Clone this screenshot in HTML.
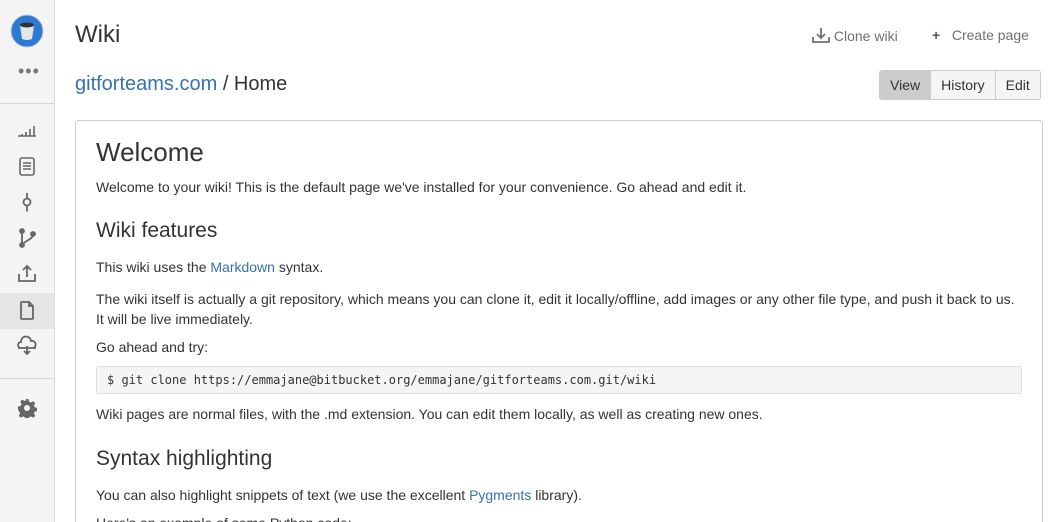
<!DOCTYPE html>
<html style="width:1063px;height:522px;overflow:hidden"><head><meta charset="utf-8"><style>
*{box-sizing:border-box;margin:0;padding:0}
body{width:1063px;height:522px;overflow:hidden;background:#fff;font-family:"Liberation Sans",Arial,sans-serif;color:#333;position:relative}
.side{position:absolute;left:0;top:0;width:55px;height:522px;background:#f4f4f4;border-right:1px solid #ddd}
.sep{position:absolute;left:0;width:54px;height:1px;background:#d6d6d6}
.ic{position:absolute;left:17px;width:20px;height:20px}
.active{position:absolute;left:0;top:293px;width:54px;height:36px;background:#e5e5e5}
h1{position:absolute;left:75px;top:21px;font-size:24px;font-weight:normal;color:#333}
.bc{position:absolute;left:75px;top:73px;font-size:20px;color:#333}
.bc a{color:#3572b0;text-decoration:none}
.tl{position:absolute;top:27px;font-size:14px;color:#707070}
.btns{position:absolute;left:879px;top:70px;height:30px;display:flex;border:1px solid #ccc;border-radius:3px;overflow:hidden;font-size:14px}
.btns div{padding:0 10px;line-height:28px;background:#f5f5f5;border-left:1px solid #ccc;color:#333}
.btns div:first-child{border-left:none;background:#ccc}
.card{position:absolute;left:75px;top:120px;width:968px;height:440px;border:1px solid #ccc;border-radius:4px}
.c{position:absolute;left:96px;font-size:14px;color:#333}
.c a{color:#3572b0;text-decoration:none}
h2{position:absolute;left:96px;font-weight:normal;color:#333}
pre{position:absolute;left:96px;top:366px;width:926px;height:28px;background:#f5f5f5;border:1px solid #ddd;border-radius:3px;font-family:"DejaVu Sans Mono","Liberation Mono",monospace;font-size:12px;line-height:26px;padding-left:10px;color:#333}
</style></head><body>
<div class="side">
<svg style="position:absolute;left:10px;top:14px" width="34" height="34"><circle cx="17" cy="17" r="16" fill="#2d7ad2" stroke="#bcd" stroke-width="1"/><path d="M10 11 Q17 7 24 11 L22 25 Q17 27 12 25Z" fill="#e6e6e6"/><ellipse cx="17" cy="11" rx="7" ry="2.5" fill="#333"/></svg>
<div style="position:absolute;left:18px;top:66px;font-size:18px;color:#777;letter-spacing:1px;line-height:10px">•••</div>
<div class="sep" style="top:103px"></div>
<svg class="ic" style="top:120px" viewBox="0 0 20 20" stroke="#666" stroke-width="1.6" fill="none"><path d="M1 16h18M5 16v-2M9 16v-4M13 16v-7M17 16v-10"/></svg>
<svg class="ic" style="top:156px" viewBox="0 0 20 20" stroke="#666" stroke-width="1.6" fill="none"><rect x="3" y="2" width="14" height="17" rx="2"/><path d="M6 7h8M6 10h8M6 13h8"/></svg>
<svg class="ic" style="top:192px" viewBox="0 0 20 20" stroke="#666" stroke-width="1.8" fill="none"><circle cx="10" cy="10" r="3.5"/><path d="M10 1v5.5M10 13.5v6"/></svg>
<svg class="ic" style="top:228px" viewBox="0 0 20 20" stroke="#666" stroke-width="1.8" fill="#666"><circle cx="5" cy="3" r="2"/><circle cx="5" cy="17" r="2"/><circle cx="16" cy="6" r="2"/><path fill="none" d="M5 3v14M16 6c0 6-8 6-11 11"/></svg>
<svg class="ic" style="top:263px" viewBox="0 0 20 20" stroke="#666" stroke-width="1.8" fill="none"><path d="M2 11v7h16v-7M10 14V3M6 7l4-4 4 4"/></svg>
<div class="active"></div>
<svg class="ic" style="top:300px" viewBox="0 0 20 20" stroke="#666" stroke-width="1.8" fill="none"><path d="M4 2h8l4 4v12a1 1 0 0 1-1 1H5a1 1 0 0 1-1-1V3a1 1 0 0 1 1-1zM12 2v4h4"/></svg>
<svg class="ic" style="top:335px" viewBox="0 0 20 20" stroke="#666" stroke-width="1.8" fill="none"><path d="M5 13H4a3 3 0 0 1 0-6 5 5 0 0 1 10-1 3.5 3.5 0 0 1 2 7h-1M1 13h18M10 11v8M7 16l3 3 3-3"/></svg>
<div class="sep" style="top:378px"></div>
<svg class="ic" style="top:398px" viewBox="0 0 20 20" fill="#666"><path d="M8.5 1h3l.5 2.5 2 1 2.2-1.4 2.1 2.1-1.4 2.2 1 2 2.6.6v3l-2.6.5-1 2 1.4 2.2-2.1 2.1-2.2-1.4-2 1-.5 2.6h-3l-.5-2.6-2-1-2.2 1.4-2.1-2.1 1.4-2.2-1-2L1 11.5v-3l2.6-.6 1-2-1.4-2.2 2.1-2.1 2.2 1.4 2-1z"/><circle cx="10" cy="10" r="3" fill="#f4f4f4"/></svg>
</div>
<h1>Wiki</h1>
<div class="tl" style="left:812px"><svg width="18" height="16" viewBox="0 0 18 16" stroke="#707070" stroke-width="1.8" fill="none" style="vertical-align:-2px"><path d="M1 10v5h16v-5M9 1v10M5 7l4 4 4-4"/></svg> Clone wiki</div>
<div class="tl" style="left:932px"><span style="font-weight:bold;color:#555">+</span>&nbsp;&nbsp; Create page</div>
<div class="bc"><a>gitforteams.com</a> / Home</div>
<div class="btns"><div>View</div><div>History</div><div>Edit</div></div>
<div class="card"></div>
<h2 style="top:137px;font-size:26px">Welcome</h2>
<div class="c" style="top:179px">Welcome to your wiki! This is the default page we've installed for your convenience. Go ahead and edit it.</div>
<h2 style="top:219px;font-size:21px">Wiki features</h2>
<div class="c" style="top:259px">This wiki uses the <a>Markdown</a> syntax.</div>
<div class="c" style="top:289px;line-height:20px;width:930px">The wiki itself is actually a git repository, which means you can clone it, edit it locally/offline, add images or any other file type, and push it back to us. It will be live immediately.</div>
<div class="c" style="top:339px">Go ahead and try:</div>
<pre>$ git clone https://emmajane@bitbucket.org/emmajane/gitforteams.com.git/wiki</pre>
<div class="c" style="top:406px">Wiki pages are normal files, with the .md extension. You can edit them locally, as well as creating new ones.</div>
<h2 style="top:447px;font-size:21px">Syntax highlighting</h2>
<div class="c" style="top:487px">You can also highlight snippets of text (we use the excellent <a>Pygments</a> library).</div>
<div class="c" style="top:515px">Here's an example of some Python code:</div>
</body></html>
